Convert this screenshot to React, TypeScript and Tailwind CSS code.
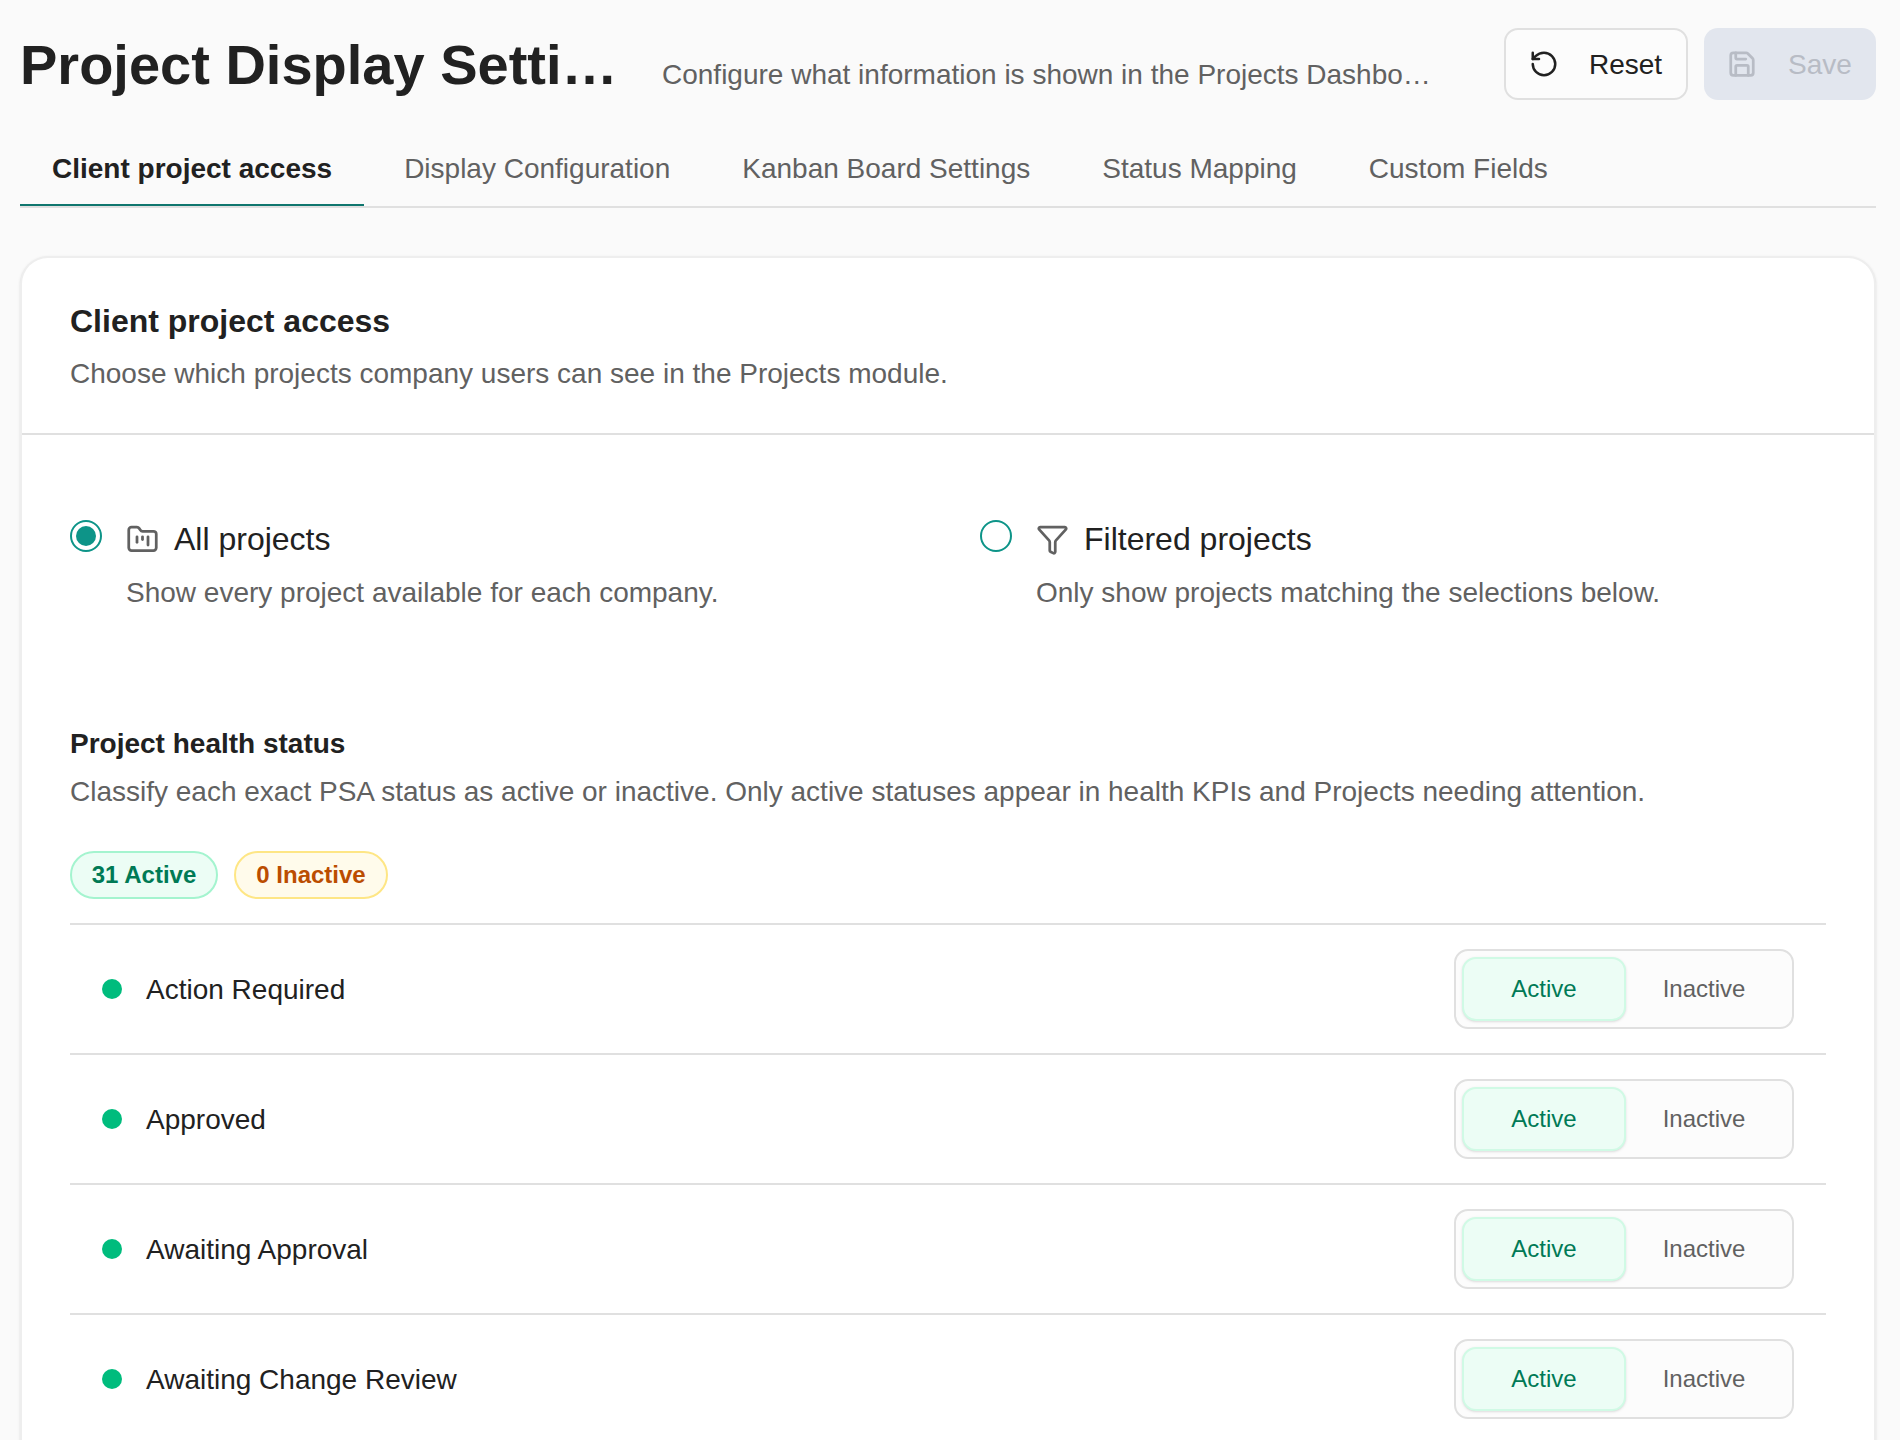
import { RotateCcw, Save, FolderKanban, Funnel } from "lucide-react";

const tabs = ["Display Configuration", "Kanban Board Settings", "Status Mapping", "Custom Fields"];
const rows = ["Action Required", "Approved", "Awaiting Approval", "Awaiting Change Review"];

function Row({ label }: { label: string }) {
  return (
    <div className="flex h-[130px] items-center justify-between border-t-2 border-[#e0e0e0] px-8">
      <div className="flex items-center gap-6">
        <span className="h-5 w-5 rounded-full bg-[#00bc7d]" />
        <span className="mt-[1px] text-[28px] text-[#212121]">{label}</span>
      </div>
      <div className="flex h-[80px] w-[340px] items-center gap-0 rounded-[14px] border-2 border-[#e0e0e0] bg-[#fcfcfc] px-[6px]">
        <span className="flex h-[64px] w-[164px] items-center justify-center rounded-[14px] border-2 border-[#d0fae5] bg-[#ecfdf5] text-[24px] text-[#007a55] shadow-sm">Active</span>
        <span className="flex h-[64px] flex-1 items-center justify-center pr-[4px] text-[24px] text-[#616161]">Inactive</span>
      </div>
    </div>
  );
}

export default function App() {
  return (
    <div className="h-[1440px] overflow-hidden bg-[#fafafa] pl-5 pr-6 font-['Liberation_Sans',Arial,sans-serif]">
      <header className="flex h-[100px] items-start justify-between pt-7">
        <div className="flex h-[72px] items-center">
          <h1 className="mt-[1px] w-[598px] truncate text-[56px] font-bold leading-[72px] text-[#212121]">Project Display Settings</h1>
          <p className="ml-[44px] mt-[22px] w-[770px] truncate text-[28px] text-[#616161]">Configure what information is shown in the Projects Dashboard</p>
        </div>
        <div className="flex gap-4">
          <button className="flex h-[72px] w-[184px] items-center gap-[30px] rounded-[14px] border-2 border-[#e0e0e0] bg-[#fcfcfc] pl-[23px] text-[28px] text-[#212121]">
            <RotateCcw size={30} strokeWidth={2} />
            <span className="mt-[1px]">Reset</span>
          </button>
          <button className="flex h-[72px] w-[172px] items-center gap-[31px] rounded-[14px] bg-[#e2e6ee] pl-[23px] text-[28px] text-[#b8bcc5]">
            <Save size={30} strokeWidth={2.2} />
            <span className="mt-[1px]">Save</span>
          </button>
        </div>
      </header>
      <nav className="flex h-[108px] items-end gap-2 border-b-2 border-[#e0e0e0]">
        <div className="flex h-[74px] items-center border-b-2 border-[#0f766e] px-8 pt-[1px] text-[28px] font-bold text-[#212121]">Client project access</div>
        {tabs.map((t) => (
          <div key={t} className="flex h-[74px] items-center border-b-2 border-transparent px-8 pt-[1px] text-[28px] text-[#616161]">{t}</div>
        ))}
      </nav>
      <section className="mt-[48px] rounded-t-[28px] border-2 border-b-0 border-[#eeeeee] bg-white shadow-sm">
        <div className="h-[177px] border-b-2 border-[#e0e0e0] px-[48px] pt-[41px]">
          <h2 className="text-[32px] font-bold leading-[44px] text-[#212121]">Client project access</h2>
          <p className="mt-[9px] text-[28px] leading-[44px] text-[#616161]">Choose which projects company users can see in the Projects module.</p>
        </div>
        <div className="px-[48px]">
          <div className="flex pt-[84px]">
            <div className="flex w-[910px] gap-6">
              <span className="mt-[1px] flex h-8 w-8 items-center justify-center rounded-full border-2 border-[#0d9488]">
                <span className="h-5 w-5 rounded-full bg-[#0d9488]" />
              </span>
              <div>
                <div className="flex items-center gap-[15px] text-[32px] leading-[40px] text-[#212121]">
                  <FolderKanban size={33} strokeWidth={2} className="text-[#616161]" />
                  All projects
                </div>
                <p className="mt-[14px] text-[28px] leading-[40px] text-[#616161]">Show every project available for each company.</p>
              </div>
            </div>
            <div className="flex gap-6">
              <span className="mt-[1px] h-8 w-8 rounded-full border-2 border-[#0d9488]" />
              <div>
                <div className="flex items-center gap-[15px] text-[32px] leading-[40px] text-[#212121]">
                  <Funnel size={33} strokeWidth={2} className="text-[#616161]" />
                  Filtered projects
                </div>
                <p className="mt-[14px] text-[28px] leading-[40px] text-[#616161]">Only show projects matching the selections below.</p>
              </div>
            </div>
          </div>
          <h3 className="mt-[111px] text-[28px] font-bold leading-[40px] text-[#212121]">Project health status</h3>
          <p className="mt-[8px] text-[28px] leading-[40px] text-[#616161]">Classify each exact PSA status as active or inactive. Only active statuses appear in health KPIs and Projects needing attention.</p>
          <div className="mt-[39px] flex gap-4">
            <span className="flex h-[48px] w-[148px] items-center justify-center rounded-full border-2 border-[#a4f4cf] bg-[#ecfdf5] text-[24px] font-bold text-[#007a55]">31 Active</span>
            <span className="flex h-[48px] w-[154px] items-center justify-center rounded-full border-2 border-[#fee685] bg-[#fffbeb] text-[24px] font-bold text-[#bb4d00]">0 Inactive</span>
          </div>
          <div className="mt-[24px]">
            {rows.map((r) => <Row key={r} label={r} />)}
          </div>
        </div>
      </section>
    </div>
  );
}
